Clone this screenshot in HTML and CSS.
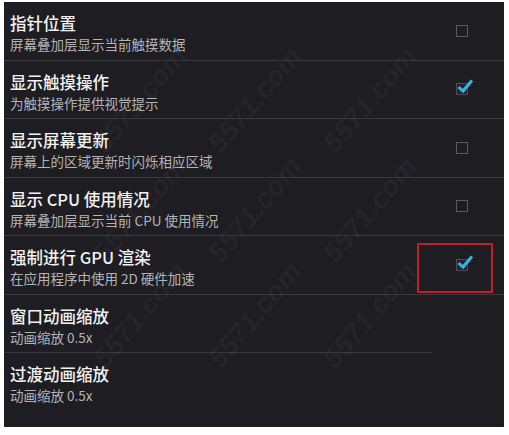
FILE: index.html
```html
<!DOCTYPE html>
<html lang="zh-CN">
<head>
<meta charset="UTF-8" />
<meta name="viewport" content="width=device-width, initial-scale=1" />
<title>开发者选项</title>
<link rel="stylesheet" href="styles.css">
</head>
<body>

<div class="screen">
  <div class="pref">
    <div class="text">
      <div class="title">指针位置</div>
      <div class="summary">屏幕叠加层显示当前触摸数据</div>
    </div>
    <span class="check"></span>
  </div>

  <div class="pref">
    <div class="text">
      <div class="title">显示触摸操作</div>
      <div class="summary">为触摸操作提供视觉提示</div>
    </div>
    <span class="check on">
      <svg viewBox="0 0 18 16" width="18" height="16"><path d="M2.5 9 L7 13 L16 2.5" fill="none" stroke="#33b5e5" stroke-width="3"/></svg>
    </span>
  </div>

  <div class="pref">
    <div class="text">
      <div class="title">显示屏幕更新</div>
      <div class="summary">屏幕上的区域更新时闪烁相应区域</div>
    </div>
    <span class="check"></span>
  </div>

  <div class="pref">
    <div class="text">
      <div class="title">显示 CPU 使用情况</div>
      <div class="summary">屏幕叠加层显示当前 CPU 使用情况</div>
    </div>
    <span class="check"></span>
  </div>

  <div class="pref">
    <div class="text">
      <div class="title">强制进行 GPU 渲染</div>
      <div class="summary">在应用程序中使用 2D 硬件加速</div>
    </div>
    <span class="check on">
      <svg viewBox="0 0 18 16" width="18" height="16"><path d="M2.5 9 L7 13 L16 2.5" fill="none" stroke="#33b5e5" stroke-width="3"/></svg>
    </span>
  </div>

  <div class="pref short">
    <div class="text">
      <div class="title">窗口动画缩放</div>
      <div class="summary">动画缩放 0.5x</div>
    </div>
  </div>

  <div class="pref last">
    <div class="text">
      <div class="title">过渡动画缩放</div>
      <div class="summary">动画缩放 0.5x</div>
    </div>
  </div>

  <!-- red marker around the GPU checkbox -->
  <div class="marker"></div>

  <!-- site watermark -->
  <div class="watermarks" aria-hidden="true">
    <span class="wm" style="left:136px;top:98px">5571.com</span>
    <span class="wm" style="left:251px;top:98px">5571.com</span>
    <span class="wm" style="left:366px;top:98px">5571.com</span>
    <span class="wm" style="left:136px;top:208px">5571.com</span>
    <span class="wm" style="left:251px;top:208px">5571.com</span>
    <span class="wm" style="left:366px;top:208px">5571.com</span>
    <span class="wm" style="left:136px;top:313px">5571.com</span>
    <span class="wm" style="left:251px;top:313px">5571.com</span>
    <span class="wm" style="left:366px;top:313px">5571.com</span>
  </div>
</div>

</body>
</html>
```

FILE: styles.css
```css
body {
  margin: 0;
  background: #ffffff;
  font-family: "Noto Sans CJK SC", "Noto Sans", sans-serif;
}
.screen {
  position: relative;
  margin: 2px 0 0 4px;
  width: 500px;
  height: 425px;
  background: #1e1d22;
  overflow: hidden;
}
.pref {
  position: relative;
  box-sizing: border-box;
  height: 58.5px;
  display: flex;
  align-items: center;
  justify-content: space-between;
  padding: 0 36px 0 6px;
  border-bottom: 1px solid #38383d;
}
.pref.short {
  border-bottom-color: transparent;
}
.pref.short::after {
  content: "";
  position: absolute;
  left: 0;
  bottom: -1px;
  width: 428px;
  height: 1px;
  background: #38383d;
}
.pref.last {
  border-bottom: none;
}
.text {
  align-self: flex-start;
  padding-top: 11px;
}
.title {
  color: #f2f2f2;
  font-size: 16.5px;
  line-height: 20px;
  font-weight: 500;
}
.summary {
  margin-top: 3px;
  color: #b4b4b6;
  font-size: 13.5px;
  line-height: 16px;
}
.check {
  position: relative;
  box-sizing: border-box;
  width: 12px;
  height: 12px;
  border: 1.5px solid #5a5a5f;
}
.check.on {
  border-color: #4d4c52;
  background: #26252a;
}
.check svg {
  position: absolute;
  left: -1px;
  top: -6px;
}
.marker {
  position: absolute;
  left: 413px;
  top: 241px;
  width: 76px;
  height: 50px;
  box-sizing: border-box;
  border: 2px solid #bd2029;
}
.watermarks {
  position: absolute;
  inset: 0;
  pointer-events: none;
}
.wm {
  position: absolute;
  transform: translate(-50%, -50%) rotate(-50deg);
  font-family: "Liberation Sans", sans-serif;
  font-style: italic;
  font-weight: 700;
  font-size: 28px;
  color: rgba(255, 255, 255, 0.04);
  white-space: nowrap;
}
```
